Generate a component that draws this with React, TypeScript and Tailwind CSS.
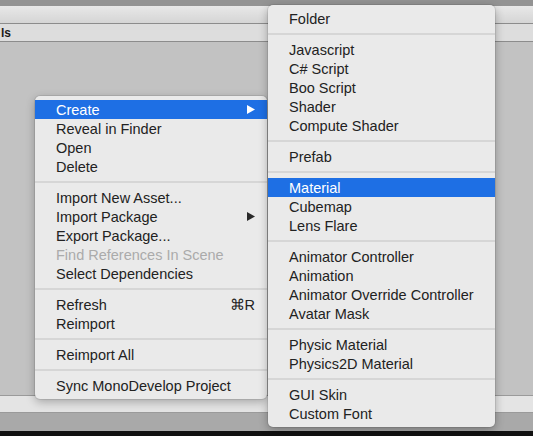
import React from "react"

type Item =
  | { kind: "sep" }
  | { kind: "item"; label: string; active?: boolean; disabled?: boolean; arrow?: boolean; shortcut?: string }

const contextItems: Item[] = [
  { kind: "item", label: "Create", active: true, arrow: true },
  { kind: "item", label: "Reveal in Finder" },
  { kind: "item", label: "Open" },
  { kind: "item", label: "Delete" },
  { kind: "sep" },
  { kind: "item", label: "Import New Asset..." },
  { kind: "item", label: "Import Package", arrow: true },
  { kind: "item", label: "Export Package..." },
  { kind: "item", label: "Find References In Scene", disabled: true },
  { kind: "item", label: "Select Dependencies" },
  { kind: "sep" },
  { kind: "item", label: "Refresh", shortcut: "⌘R" },
  { kind: "item", label: "Reimport" },
  { kind: "sep" },
  { kind: "item", label: "Reimport All" },
  { kind: "sep" },
  { kind: "item", label: "Sync MonoDevelop Project" },
]

const createItems: Item[] = [
  { kind: "item", label: "Folder" },
  { kind: "sep" },
  { kind: "item", label: "Javascript" },
  { kind: "item", label: "C# Script" },
  { kind: "item", label: "Boo Script" },
  { kind: "item", label: "Shader" },
  { kind: "item", label: "Compute Shader" },
  { kind: "sep" },
  { kind: "item", label: "Prefab" },
  { kind: "sep" },
  { kind: "item", label: "Material", active: true },
  { kind: "item", label: "Cubemap" },
  { kind: "item", label: "Lens Flare" },
  { kind: "sep" },
  { kind: "item", label: "Animator Controller" },
  { kind: "item", label: "Animation" },
  { kind: "item", label: "Animator Override Controller" },
  { kind: "item", label: "Avatar Mask" },
  { kind: "sep" },
  { kind: "item", label: "Physic Material" },
  { kind: "item", label: "Physics2D Material" },
  { kind: "sep" },
  { kind: "item", label: "GUI Skin" },
  { kind: "item", label: "Custom Font" },
]

function Arrow({ white }: { white?: boolean }) {
  return (
    <svg width="8" height="9" viewBox="0 0 8 9">
      <polygon points="0,0 8,4.5 0,9" fill={white ? "#ffffff" : "#2a2a2a"} />
    </svg>
  )
}

function MenuList({ items }: { items: Item[] }) {
  return (
    <div className="flex flex-col py-[4px]">
      {items.map((item, i) => {
        if (item.kind === "sep") {
          return <div key={i} className="h-[2px] my-[5px] bg-[#d6d6d6]" />
        }
        const color = item.active ? "text-white" : item.disabled ? "text-[#ababab]" : "text-[#222222]"
        return (
          <div
            key={i}
            className={`flex items-center justify-between h-[19px] pl-[21px] pr-[12px] text-[14.5px] leading-[20px] ${color} ${item.active ? "bg-[#1e6fe4]" : ""}`}
          >
            <span className="whitespace-nowrap">{item.label}</span>
            {item.arrow && <Arrow white={item.active} />}
            {item.shortcut && <span>{item.shortcut}</span>}
          </div>
        )
      })}
    </div>
  )
}

export default function App() {
  return (
    <div className="relative w-[533px] h-[436px] overflow-hidden bg-[#c2c2c2] font-['Liberation_Sans','Helvetica_Neue',Arial,sans-serif]">
      <div className="flex flex-col h-full">
        {/* window chrome */}
        <div className="h-[6px] bg-[#939393]" />
        <div className="h-[17px] bg-gradient-to-b from-[#e8e8e8] to-[#d5d5d5]" />
        <div className="h-[1px] bg-[#8c8c8c]" />
        <div className="h-[17px] bg-[#dddddd] flex items-center">
          <span className="pl-[1px] text-[12px] font-bold text-[#1a1a1a] leading-none">ls</span>
        </div>
        <div className="h-[1px] bg-[#8c8c8c]" />
        {/* project area */}
        <div className="flex-1 bg-[#c2c2c2]" />
        <div className="h-[1px] bg-[#9a9a9a]" />
        <div className="h-[16px] bg-[#e4e4e4]" />
        <div className="h-[1px] bg-[#9a9a9a]" />
        <div className="h-[18px] bg-[#a9a9a9]" />
        <div className="h-[5px] bg-[#111111]" />
      </div>

      {/* context menu */}
      <div className="absolute left-[35px] top-[96px] w-[232px] rounded-[5px] bg-[#eaeaea] shadow-[0_3px_10px_rgba(0,0,0,0.28),0_0_0_1px_rgba(0,0,0,0.08)]">
        <MenuList items={contextItems} />
      </div>

      {/* Create submenu */}
      <div className="absolute left-[268px] top-[5px] w-[227px] rounded-[5px] bg-[#eaeaea] shadow-[0_3px_10px_rgba(0,0,0,0.3),0_0_0_1px_rgba(0,0,0,0.08)]">
        <MenuList items={createItems} />
      </div>
    </div>
  )
}
